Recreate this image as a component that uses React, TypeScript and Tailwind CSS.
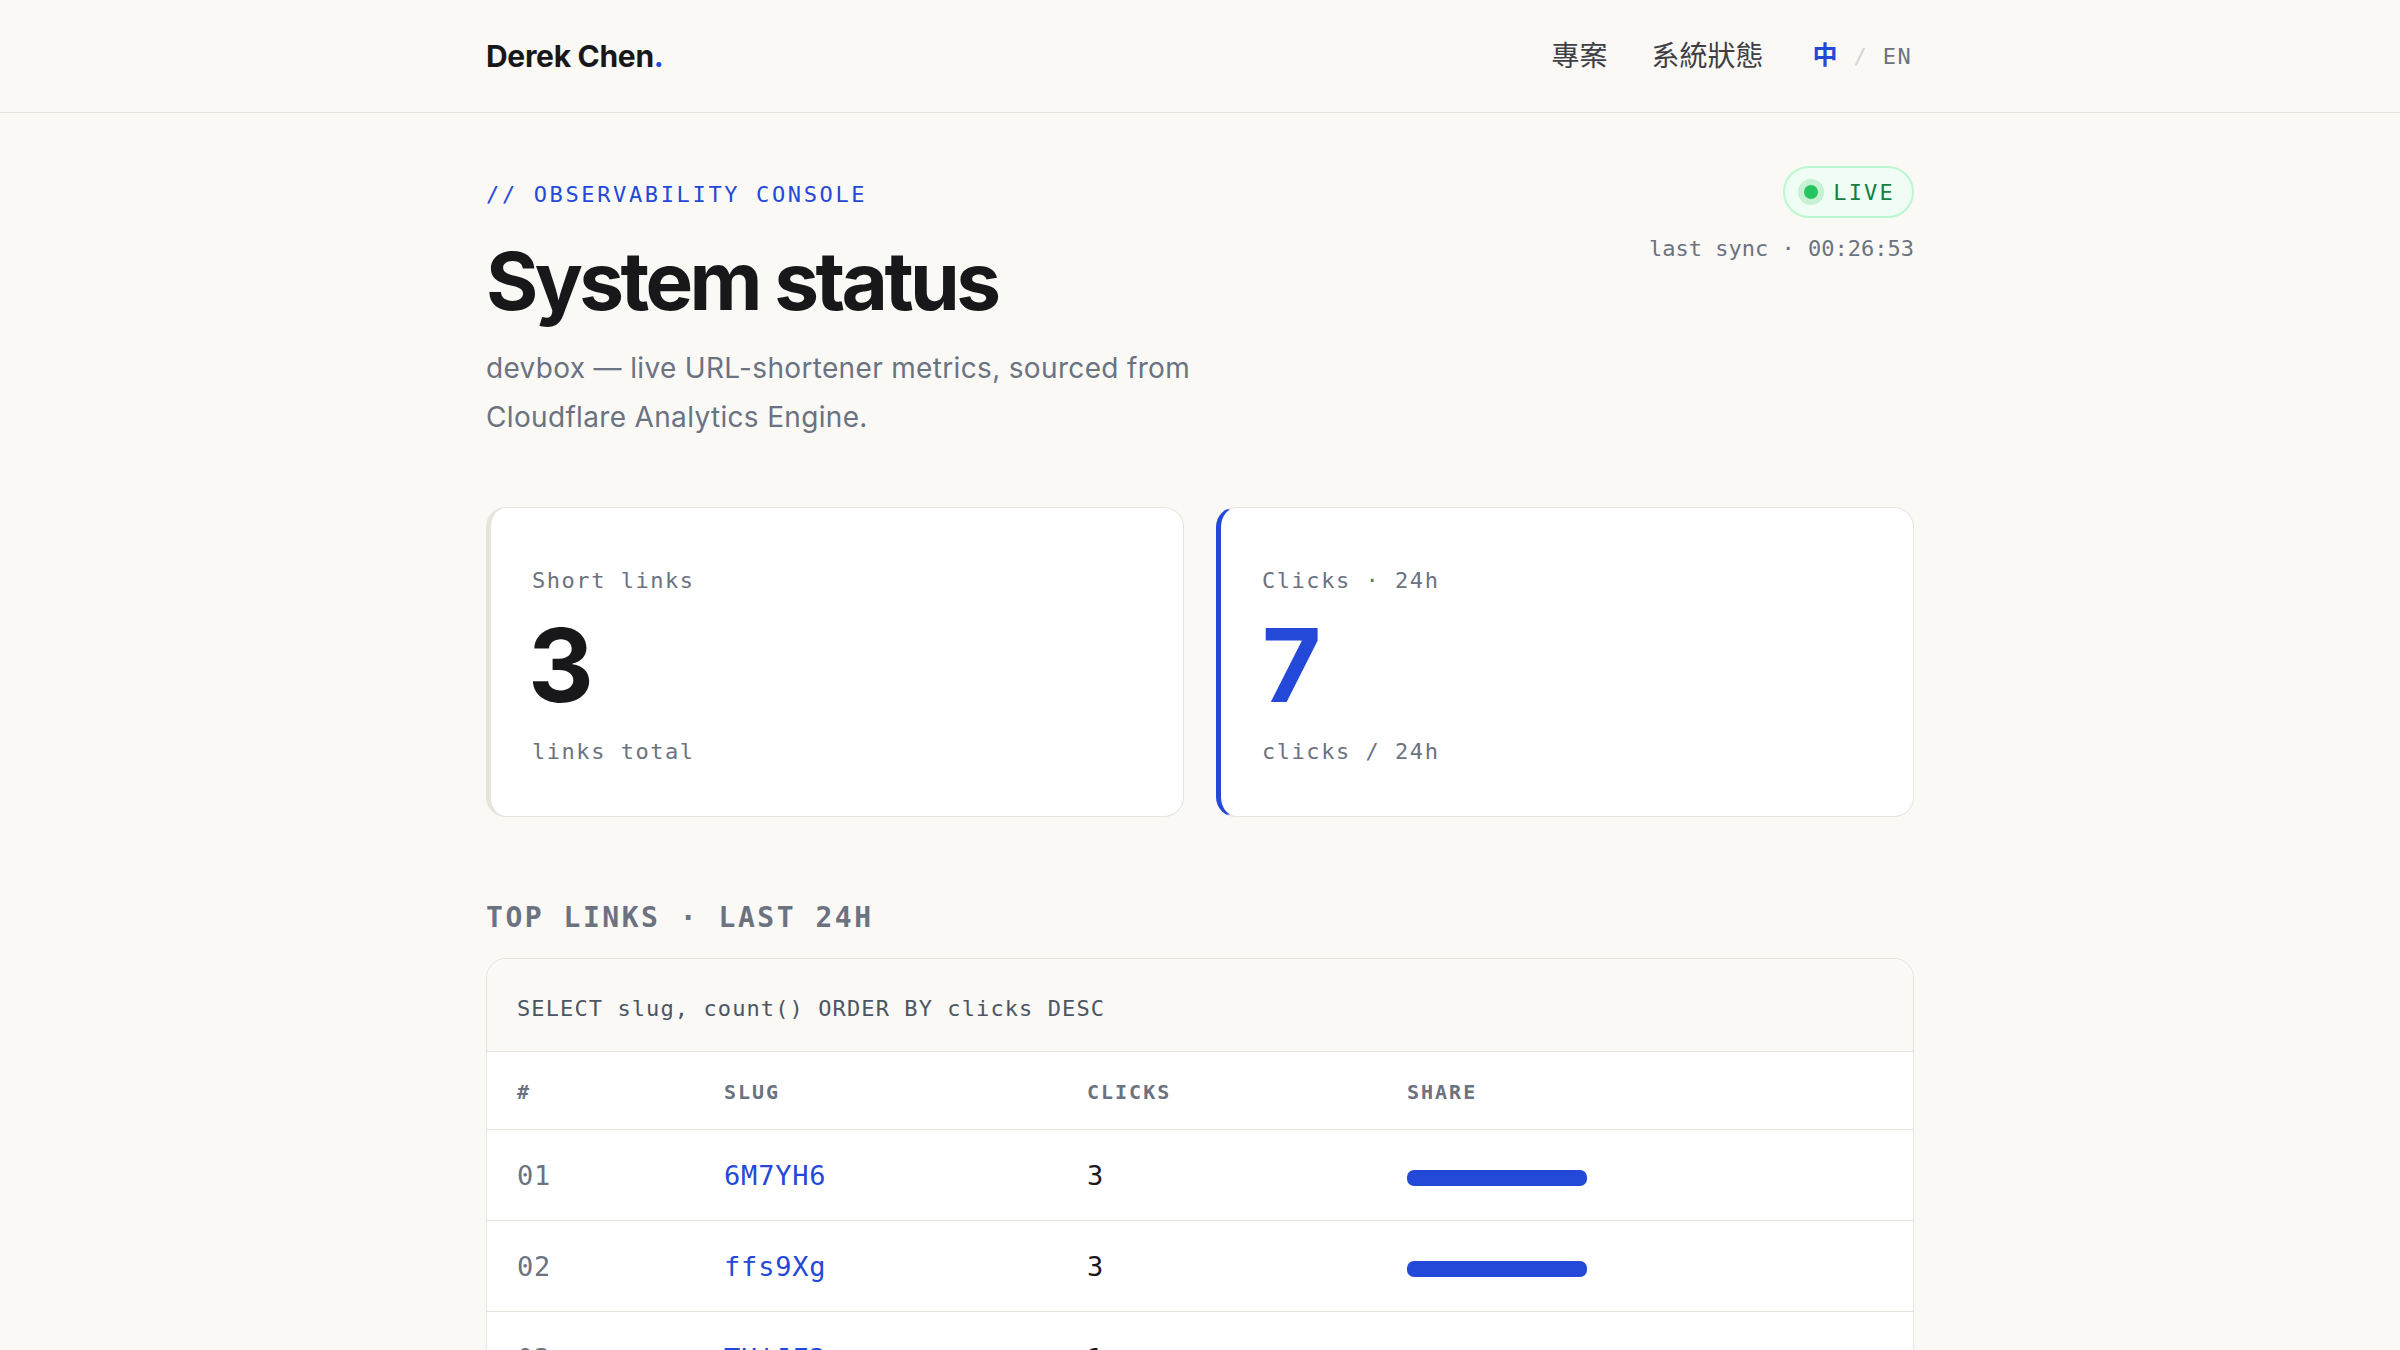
import React from 'react';

const mono = "font-['DejaVu_Sans_Mono',_'Liberation_Mono',_monospace]";
const sans = "font-['Inter',_'Noto_Sans',_sans-serif]";
const cjk = "font-['Inter',_'Noto_Sans_CJK_TC',_sans-serif]";

interface Row { rank: string; slug: string; clicks: number; share: number; }

const rows: Row[] = [
  { rank: '01', slug: '6M7YH6', clicks: 3, share: 180 },
  { rank: '02', slug: 'ffs9Xg', clicks: 3, share: 180 },
  { rank: '03', slug: 'THiJF3', clicks: 1, share: 60 },
];

function StatCard({ label, value, sub, accent }: { label: string; value: string; sub: string; accent?: boolean }) {
  return (
    <div className={`bg-white rounded-[20px] border border-[#e7e4de] border-l-[5px] pl-[41px] pt-[56px] pb-[48px] ${accent ? 'border-l-[#2448d8]' : 'border-l-[#e7e4de]'}`}>
      <p className={`${mono} text-[22px] leading-[33px] tracking-[0.07em] text-[#6b7280]`}>{label}</p>
      <p className={`${sans} mt-[17px] text-[102px] leading-none font-bold tracking-[-0.02em] ${accent ? 'text-[#2448d8]' : '-ml-[4px] text-[#18181b]'}`}>{value}</p>
      <p className={`${mono} mt-[19px] text-[22px] leading-[33px] tracking-[0.07em] text-[#6b7280]`}>{sub}</p>
    </div>
  );
}

export default function App() {
  return (
    <div className="min-h-screen bg-[#faf9f6] text-[#18181b]">
      {/* Top bar */}
      <header className="h-[113px] border-b border-[#e7e4de]">
        <div className="max-w-[1428px] mx-auto h-full flex items-center justify-between">
          <a className={`${sans} text-[30px] font-bold tracking-[-0.01em] text-[#18181b]`}>Derek Chen<span className="text-[#2448d8]">.</span></a>
          <nav className="flex items-center">
            <div className={`${cjk} flex items-center gap-[44px] text-[28px] text-[#3f3f46]`}>
              <span>專案</span>
              <span>系統狀態</span>
            </div>
            <div className="flex items-center gap-[16px] ml-[49px] mr-[2px]">
              <span className={`${cjk} text-[25px] font-bold text-[#2448d8]`}>中</span>
              <span className={`${mono} text-[22px] text-[#d6d3d1]`}>/</span>
              <span className={`${mono} text-[22px] tracking-[0.06em] text-[#6b7280]`}>EN</span>
            </div>
          </nav>
        </div>
      </header>

      <main className="max-w-[1428px] mx-auto pt-[53px] pb-[80px]">
        {/* Title block */}
        <div className="flex items-start justify-between">
          <div>
            <p className={`${mono} mt-[12px] text-[22px] leading-[33px] tracking-[0.12em] text-[#2448d8]`}>// OBSERVABILITY CONSOLE</p>
            <h1 className={`${sans} mt-[30px] text-[80px] leading-none font-bold tracking-[-0.045em] text-[#18181b]`}>System status</h1>
            <p className={`${sans} mt-[23px] max-w-[780px] text-[28px] leading-[49px] tracking-[0.012em] text-[#6b7280]`}>devbox — live URL-shortener metrics, sourced from Cloudflare Analytics Engine.</p>
          </div>
          <div className="flex flex-col items-end">
            <div className="h-[52px] flex items-center gap-[9px] pl-[13px] pr-[17px] rounded-full border-2 border-[#bbf7d0] bg-[#f0fdf4]">
              <span className="w-[26px] h-[26px] rounded-full bg-[#c8f0d5] flex items-center justify-center">
                <span className="w-[14px] h-[14px] rounded-full bg-[#22c55e]" />
              </span>
              <span className={`${mono} text-[22px] tracking-[0.1em] text-[#15803d]`}>LIVE</span>
            </div>
            <p className={`${mono} mt-[14px] text-[22px] leading-[33px] text-[#6b7280]`}>last sync · 00:26:53</p>
          </div>
        </div>

        {/* Stat cards */}
        <div className="mt-[65px] grid grid-cols-2 gap-[32px]">
          <StatCard label="Short links" value="3" sub="links total" />
          <StatCard label="Clicks · 24h" value="7" sub="clicks / 24h" accent />
        </div>

        {/* Top links */}
        <h2 className={`${mono} mt-[80px] text-[28px] leading-[42px] font-bold tracking-[0.09em] text-[#6b7280]`}>TOP LINKS · LAST 24H</h2>
        <div className="mt-[19px] rounded-[20px] border border-[#e7e4de] overflow-hidden bg-white">
          <div className={`${mono} h-[93px] flex items-center pl-[30px] pt-[6px] bg-[#faf9f6] border-b border-[#e7e4de] text-[22px] tracking-[0.05em] text-[#4b5563]`}>
            SELECT slug, count() ORDER BY clicks DESC
          </div>
          <div className={`${mono} h-[78px] grid grid-cols-[207px_363px_320px_1fr] items-center pl-[30px] pt-[3px] border-b border-[#e7e4de] text-[20px] font-bold tracking-[0.1em] text-[#6b7280]`}>
            <span>#</span>
            <span>SLUG</span>
            <span>CLICKS</span>
            <span>SHARE</span>
          </div>
          {rows.map((r) => (
            <div key={r.rank} className={`${mono} h-[91px] grid grid-cols-[207px_363px_320px_1fr] items-center pl-[30px] pt-[3px] border-b border-[#e7e4de] last:border-b-0 text-[27px] tracking-[0.03em]`}>
              <span className="text-[#6b7280]">{r.rank}</span>
              <span className="text-[#2448d8]">{r.slug}</span>
              <span className="text-[#18181b]">{r.clicks}</span>
              <span className="flex items-center">
                <span className="h-[16px] rounded-[7px] bg-[#2448d8] mt-[3px]" style={{ width: r.share }} />
              </span>
            </div>
          ))}
        </div>
      </main>
    </div>
  );
}
